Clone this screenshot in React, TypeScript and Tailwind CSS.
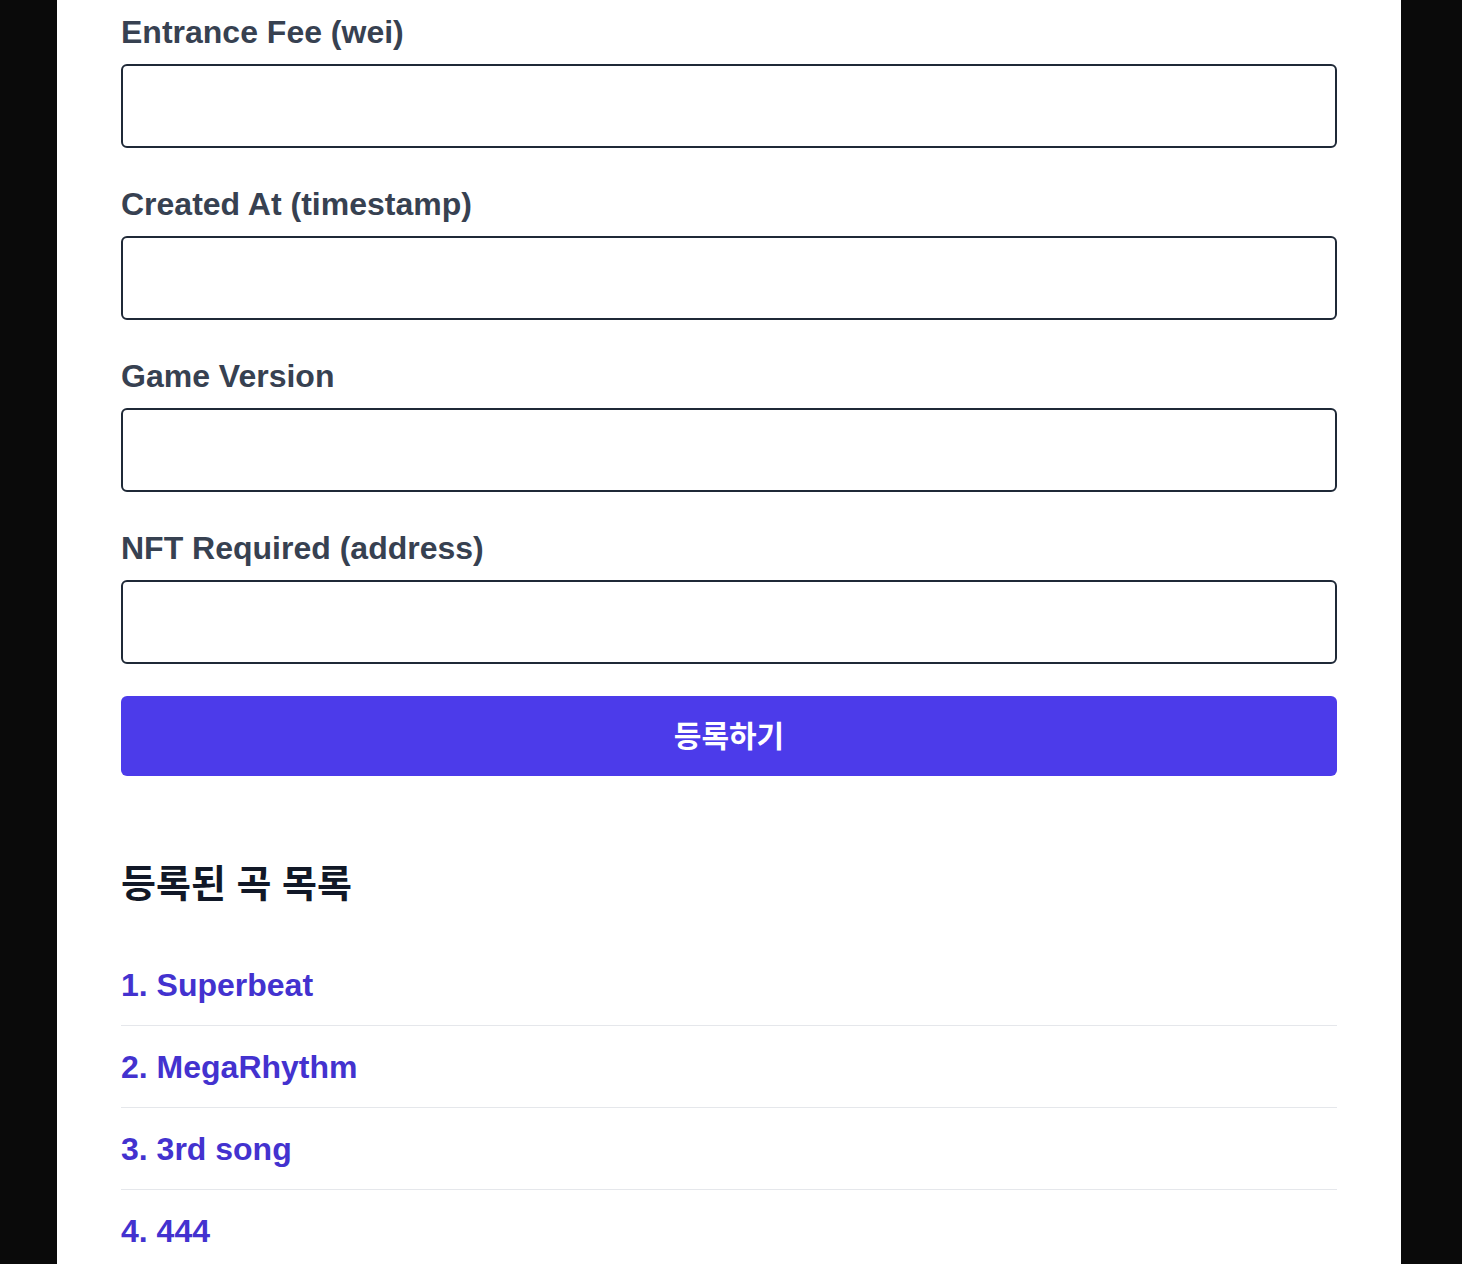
const fields = [
  "Entrance Fee (wei)",
  "Created At (timestamp)",
  "Game Version",
  "NFT Required (address)",
]

const songs = ["Superbeat", "MegaRhythm", "3rd song", "444"]

export default function App() {
  return (
    <div
      className="min-h-screen bg-[#0a0a0a] flex"
      style={{ fontFamily: '"Liberation Sans", Arial, "Noto Sans CJK KR", sans-serif' }}
    >
      <div className="ml-[57px] w-[1344px] bg-white px-[64px] pt-[12px] pb-10">
        {/* Form */}
        {fields.map((label, i) => (
          <div key={label} className={i === fields.length - 1 ? "mb-8" : "mb-9"}>
            <label className="block text-[32px] leading-[40px] font-bold text-[#374151] mb-3">
              {label}
            </label>
            <input
              type="text"
              className="block w-full h-[84px] rounded-md border-2 border-[#1f2937] bg-white px-4 text-[28px] outline-none"
            />
          </div>
        ))}

        <button className="w-full h-[80px] rounded-md bg-[#4c3bea] text-white text-[30px] font-bold">
          등록하기
        </button>

        {/* Song list */}
        <h2 className="mt-[84px] mb-[36px] text-[38px] leading-[48px] font-bold text-[#111827]">
          등록된 곡 목록
        </h2>

        <ul>
          {songs.map((song, i) => (
            <li
              key={song}
              className="h-[82px] flex items-center border-b-[1.5px] border-[#e5e7eb] text-[32px] font-bold text-[#4332cf] last:border-b-0"
            >
              {i + 1}. {song}
            </li>
          ))}
        </ul>
      </div>
    </div>
  )
}
